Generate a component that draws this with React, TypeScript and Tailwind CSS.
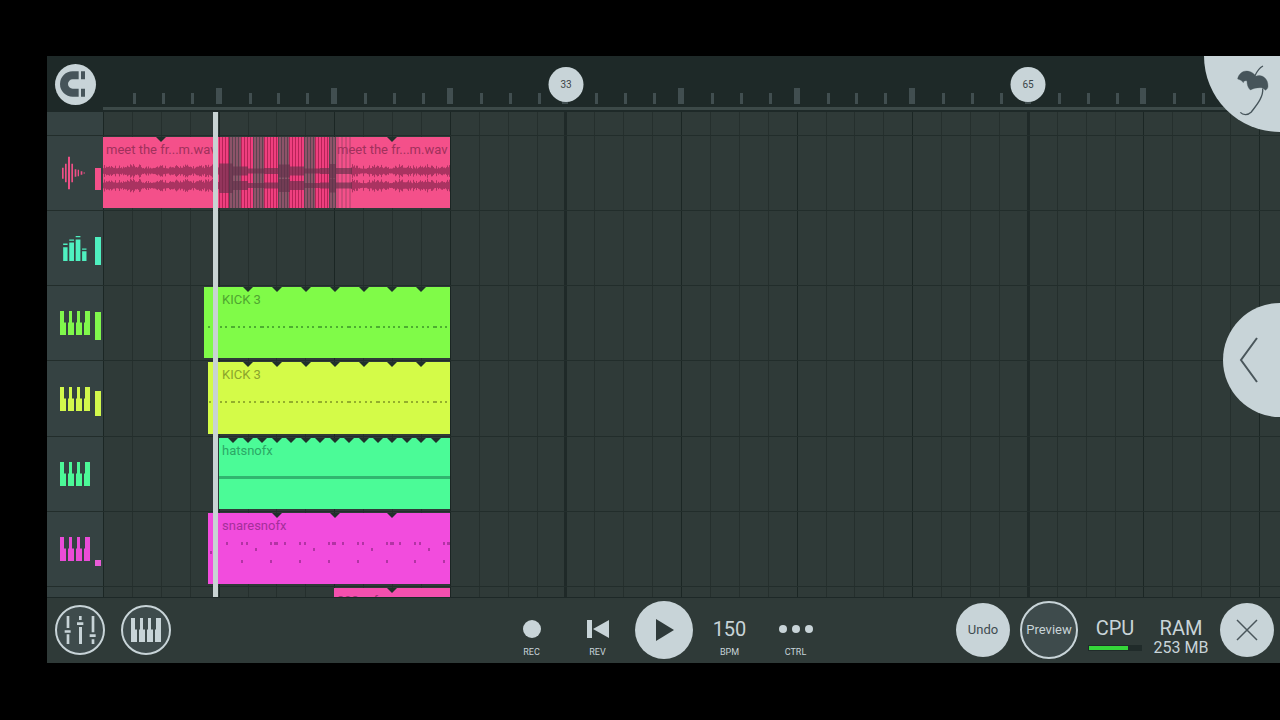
import type { ReactNode } from "react"

// Width of one bar on the timeline
const BAR = 14.45
const GRID_STEPS = Array.from({ length: 41 }, (_, i) => i)

type Clip = {
  start: number
  end: number
  label?: string
  color: string
  ink: string
  notchEvery?: number
  content?: ReactNode
}

type Track = {
  name: string
  icon: "wave" | "mixer" | "piano"
  tint: string
  meter: string
  clips: Clip[]
}

function PianoIcon({ className = "" }: { className?: string }) {
  return (
    <svg className={className} width="30" height="24" viewBox="0 0 30 24" fill="currentColor">
      <path d="M0 0h4v11.500h2V24H0z" />
      <path d="M9 0h3v11.500h2V24H8V11.500h1z" />
      <path d="M17 0h3v11.500h2V24h-6V11.500h1z" />
      <path d="M25 0h5v24h-6V11.500h1z" />
    </svg>
  )
}

function MixerTrackIcon() {
  return (
    <svg width="24" height="25" viewBox="0 0 70 74" fill="currentColor">
      <path d="M0 33h13v41H0zM18 19h14v55H18zM37 10h14v64H37zM56 45h13v29H56z" />
      <path d="M0 22h13v5H0zM18 10h14v4H18zM37 0h14v4H37zM56 37h13v4H56z" />
    </svg>
  )
}

function WaveIcon() {
  return (
    <svg className="-ml-0.5" width="24" height="34" viewBox="0 0 72 102" fill="currentColor">
      <path d="M0 35h5v33H0zM9 23h5v56H9zM18 2h6v98h-6zM28 23h5v56h-5zM38 40h5v22h-5zM47 41h4v20h-4zM56 46h5v10h-5zM65 49h3v4h-3z" />
    </svg>
  )
}

// Stereo waveform, two mirrored bands
function Waveform({ width, from = 0 }: { width: number; from?: number }) {
  const columns = []
  for (let x = from; x < width; x += 1) {
    const noise = Math.abs(Math.sin(x * 12.9898) * 43758.5453) % 1
    const swell = 2.8 + 0.6 * Math.sin(x / 4) + noise * noise * 3.6
    columns.push(
      <rect key={x} x={x} y={34 - swell} width="1" height={swell * 2} />,
      <rect key={`r${x}`} x={x} y={48.5 - swell} width="1" height={swell * 2} />,
    )
  }
  return (
    <svg className="absolute inset-0 h-full w-full" fill="#aa3361">
      {columns}
    </svg>
  )
}

const SLICE_GROUPS = [
  { x: 0, w: 10, dark: false },
  { x: 10, w: 12, dark: true },
  { x: 22, w: 12, dark: false },
  { x: 34, w: 11, dark: true },
  { x: 45, w: 14, dark: false },
  { x: 59, w: 11, dark: true },
  { x: 70, w: 15, dark: false },
  { x: 85, w: 11, dark: true },
  { x: 96, w: 14, dark: false },
  { x: 110, w: 7, dark: true },
]

const SLICE_BLOCKS = [
  [0, 14, 15],
  [14, 15, 9],
  [29, 16, 5],
  [45, 14, 6],
  [59, 12, 13],
  [71, 14, 9],
  [85, 16, 5],
  [101, 9, 6],
  [110, 7, 14],
  [117, 16, 6],
]

function Slices() {
  return (
    <svg className="absolute inset-0 h-full w-full">
      {SLICE_GROUPS.map((g) => (
        <g key={g.x}>
          <rect x={g.x} y="0" width={g.w} height="100%" fill={g.dark ? "#8d5369" : "#ef3f7f"} />
          {Array.from({ length: Math.ceil(g.w / 3) }, (_, i) => (
            <rect
              key={i}
              x={g.x + i * 3}
              y="0"
              width="1"
              height="100%"
              fill={g.dark ? "#5c4450" : "#b82358"}
            />
          ))}
        </g>
      ))}
      <path d="M117 0h3v72h-3zM122 0h2v72h-2zM126 0h2v72h-2zM130 0h2v72h-2z" fill="#cf4a7a" />
      {SLICE_BLOCKS.map(([x, w, h]) => (
        <g key={x} fill="#64304a" opacity="0.65">
          <rect x={x} y={34 - h / 2} width={w} height={h} />
          <rect x={x} y={48.5 - h / 2} width={w} height={h} />
        </g>
      ))}
    </svg>
  )
}

function KickNotes({ color, beats, offset = 0 }: { color: string; beats: number; offset?: number }) {
  return (
    <svg className="absolute inset-0 h-full w-full" fill={color}>
      {Array.from({ length: beats }, (_, i) => {
        const x = Math.round(i * BAR * 2) + offset
        return (
          <path
            key={i}
            d={`M${x + 1} 39h2v2h-2zM${x + 6} 39h2v2h-2zM${x + 12} 39h4v2h-4zM${x + 19} 39h2v2h-2zM${x + 24} 39h2v2h-2z`}
          />
        )
      })}
    </svg>
  )
}

function SnareNotes() {
  return (
    <svg className="absolute inset-0 h-full w-full" fill="#b234a4">
      {[0, 1, 2, 3].map((i) => (
        <g key={i} transform={`translate(${Math.round(i * BAR * 4)} 0)`}>
          {[7, 22, 27, 51, 55, 57].map((x) => (
            <rect key={x} x={x} y="29" width="2" height="3" />
          ))}
          <rect x="36" y="35" width="2" height="3" />
          <rect x="22" y="47" width="2" height="3" />
          <rect x="51" y="47" width="2" height="3" />
        </g>
      ))}
    </svg>
  )
}

const TRACKS: Track[] = [
  {
    name: "Audio",
    icon: "wave",
    tint: "text-[#ee4f86]",
    meter: "h-[22px] bg-[#f4508a]",
    clips: [
      {
        start: 0,
        end: 8,
        label: "meet the fr...m.wav",
        color: "bg-[#f4508a]",
        ink: "text-[#a0315c]",
        notchEvery: 4,
        content: <Waveform width={116} />,
      },
      {
        start: 8,
        end: 24,
        color: "bg-[#f4508a]",
        ink: "text-[#a0315c]",
        content: (
          <>
            <Waveform width={232} from={132} />
            <Slices />
          </>
        ),
      },
      {
        start: 16,
        end: 24,
        label: "meet the fr...m.wav",
        color: "bg-transparent",
        ink: "text-[#a0315c]",
        notchEvery: 4,
      },
    ],
  },
  {
    name: "Effects",
    icon: "mixer",
    tint: "text-[#4ff0c0]",
    meter: "h-[28px] bg-[#4ff0c0]",
    clips: [],
  },
  {
    name: "Kick 1",
    icon: "piano",
    tint: "text-[#80f84c]",
    meter: "h-[28px] bg-[#80f84c]",
    clips: [
      {
        start: 7,
        end: 8,
        color: "bg-[#80fb48]",
        ink: "text-[#45a32a]",
        content: <KickNotes color="#4cae30" beats={1} offset={3} />,
      },
      {
        start: 8,
        end: 24,
        label: "KICK 3",
        color: "bg-[#80fb48]",
        ink: "text-[#4fa530]",
        notchEvery: 2,
        content: <KickNotes color="#4cae30" beats={8} />,
      },
    ],
  },
  {
    name: "Kick 2",
    icon: "piano",
    tint: "text-[#d2f84c]",
    meter: "h-[25px] bg-[#d2f84c]",
    clips: [
      {
        start: 7.25,
        end: 8,
        color: "bg-[#d4fb48]",
        ink: "text-[#8ba52c]",
        content: <KickNotes color="#93ae2c" beats={1} />,
      },
      {
        start: 8,
        end: 24,
        label: "KICK 3",
        color: "bg-[#d4fb48]",
        ink: "text-[#8ba52c]",
        notchEvery: 2,
        content: <KickNotes color="#93ae2c" beats={8} />,
      },
    ],
  },
  {
    name: "Hats",
    icon: "piano",
    tint: "text-[#4cf897]",
    meter: "h-0",
    clips: [
      {
        start: 8,
        end: 24,
        label: "hatsnofx",
        color: "bg-[#4bfb97]",
        ink: "text-[#2ca866]",
        notchEvery: 1,
        content: (
          <svg className="absolute inset-0 h-full w-full">
            <rect x="0" y="38" width="100%" height="3" fill="#31b56f" />
          </svg>
        ),
      },
    ],
  },
  {
    name: "Snares",
    icon: "piano",
    tint: "text-[#ea4cd8]",
    meter: "h-[6px] bg-[#ea5cd8]",
    clips: [
      {
        start: 7.25,
        end: 8,
        color: "bg-[#f24cdd]",
        ink: "text-[#a4309a]",
        content: (
          <svg className="absolute inset-0 h-full w-full">
            <rect x="2" y="38" width="2" height="3" fill="#b234a4" />
          </svg>
        ),
      },
      {
        start: 8,
        end: 24,
        label: "snaresnofx",
        color: "bg-[#f24cdd]",
        ink: "text-[#a4309a]",
        notchEvery: 4,
        content: <SnareNotes />,
      },
    ],
  },
]

const LAST_CLIP: Clip = {
  start: 16,
  end: 24,
  label: "808nofx",
  color: "bg-[#f44fae]",
  ink: "text-[#a03074]",
  notchEvery: 4,
}

function ClipBlock({ clip, tall = true }: { clip: Clip; tall?: boolean }) {
  const left = Math.round(clip.start * BAR)
  const width = Math.round(clip.end * BAR) - left
  const notches = []
  if (clip.notchEvery) {
    for (let b = clip.notchEvery; b < clip.end - clip.start; b += clip.notchEvery) notches.push(b)
  }
  return (
    <div
      className={`absolute top-px overflow-hidden ${tall ? "bottom-[2px]" : "h-[71px]"} ${clip.color}`}
      style={{ left, width }}
    >
      {clip.content}
      {notches.map((b) => (
        <svg
          key={b}
          className="absolute top-0 -translate-x-1/2"
          style={{ left: Math.round(b * BAR) }}
          width="10"
          height="5"
          viewBox="0 0 10 5"
          fill="#20302b"
        >
          <path d="M0 0h10L5 5z" />
        </svg>
      ))}
      {clip.label && (
        <span
          className={`relative block pl-[3px] pt-[5px] text-[13px] leading-4 whitespace-nowrap ${clip.ink}`}
        >
          {clip.label}
        </span>
      )}
    </div>
  )
}

function TrackRow({ track }: { track: Track }) {
  return (
    <div className="flex min-h-0 border-b border-[#222d2b]">
      <button
        aria-label={track.name}
        className="grid w-14 shrink-0 grid-cols-[1fr_30px_1fr] items-center bg-[#354242]"
      >
        <span className={`col-start-2 flex justify-center ${track.tint}`}>
          {track.icon === "wave" && <WaveIcon />}
          {track.icon === "mixer" && <MixerTrackIcon />}
          {track.icon === "piano" && <PianoIcon />}
        </span>
        <span className={`mr-0.5 mb-5 w-[6px] self-end justify-self-end ${track.meter}`} />
      </button>
      <div className="relative flex-1">
        {track.clips.map((clip) => (
          <ClipBlock key={`${clip.start}-${clip.color}`} clip={clip} />
        ))}
      </div>
    </div>
  )
}

function Ruler() {
  return (
    <div className="flex h-14 shrink-0 bg-[#1e2928]">
      <div className="flex w-14 items-center justify-center">
        <button aria-label="Snap" className="size-[41px] rounded-full bg-[#c8d4d8]">
          <svg width="41" height="41" viewBox="44 41 123 123" fill="#46545a">
            <path d="M115 63H97a38 38 0 0 0 0 76h18v-24H97a14 14 0 0 1 0-28h18z" />
            <path d="M122 63h12v24h-12zM122 115h12v24h-12z" />
          </svg>
        </button>
      </div>
      <div className="relative flex-1 overflow-hidden">
        <div className="absolute inset-x-0 bottom-[2px] h-[3px] bg-[#3c4948]" />
        {GRID_STEPS.slice(1).map((i) => (
          <div
            key={i}
            className={`absolute bottom-2 bg-[#414e50] ${i % 4 === 0 ? "h-4 w-[6px] -translate-x-1/2" : "h-[11px] w-[3px]"}`}
            style={{ left: Math.round(i * BAR * 2) + (i % 4 === 0 ? 0 : 1) }}
          />
        ))}
        {[33, 65].map((bar) => (
          <div
            key={bar}
            className="absolute top-[11px] flex size-[35px] -translate-x-1/2 items-center justify-center rounded-full bg-[#c8d4d8] text-[10px] text-[#3b4648]"
            style={{ left: Math.ceil((bar - 1) * BAR) }}
          >
            {bar}
          </div>
        ))}
      </div>
    </div>
  )
}

function Playlist() {
  return (
    <div className="relative grid min-h-0 flex-1 grid-rows-[24px_repeat(6,minmax(0,1fr))_10px] overflow-hidden bg-[#2f3a38]">
      {/* Bar lines */}
      <div className="absolute inset-y-0 right-0 left-14 overflow-hidden">
        {GRID_STEPS.map((i) => (
          <div
            key={i}
            className={`absolute inset-y-0 ${
              i % 16 === 0 && i > 0
                ? "w-[3px] -translate-x-px bg-[#1f2928]"
                : i % 4 === 0
                  ? "w-px bg-[#1b2624]"
                  : "w-px bg-[#252f2d]"
            }`}
            style={{ left: Math.round(i * BAR * 2) }}
          />
        ))}
      </div>
      <div className="relative flex border-b border-[#222d2b]">
        <div className="w-14 bg-[#354242]" />
      </div>
      {TRACKS.map((track) => (
        <div key={track.name} className="relative grid min-h-0">
          <TrackRow track={track} />
        </div>
      ))}
      <div className="relative flex overflow-hidden">
        <div className="w-14 bg-[#354242]" />
        <div className="relative flex-1">
          <ClipBlock clip={LAST_CLIP} tall={false} />
        </div>
      </div>
      {/* Playhead */}
      <div className="absolute inset-y-0 left-[166px] w-[5px] bg-[#c8d3d3]" />
    </div>
  )
}

function Transport({ label, children }: { label: string; children: ReactNode }) {
  return (
    <button className="mt-3 flex w-[66px] flex-col items-center">
      <span className="flex h-8 items-center">{children}</span>
      <span className="mt-px text-[9px] leading-3">{label}</span>
    </button>
  )
}

function Toolbar() {
  return (
    <footer className="grid h-[66px] shrink-0 grid-cols-[1fr_auto_1fr] items-center border-t border-[#1d2827] bg-[#2f3a38] pb-0.5 text-[#c8d4d8]">
      <div className="flex">
        <div className="flex w-[66px] justify-center">
          <button
            aria-label="Mixer"
            className="flex size-[50px] items-center justify-center rounded-full border-2 border-[#c8d4d8] bg-[#3e4b4c]"
          >
            <svg width="32" height="28" viewBox="0 0 96 84" fill="currentColor">
              <path d="M8 0h8v36H8zM2 43h18v7H2zM8 55h8v29H8z" />
              <path d="M45 0h8v12h-8zM39 19h19v8H39zM45 33h9v51h-9z" />
              <path d="M83 0h8v49h-8zM77 55h18v8H77zM83 70h8v14h-8z" />
            </svg>
          </button>
        </div>
        <div className="flex w-[66px] justify-center">
          <button
            aria-label="Keyboard"
            className="flex size-[50px] items-center justify-center rounded-full border-2 border-[#c8d4d8] bg-[#3e4b4c]"
          >
            <PianoIcon />
          </button>
        </div>
      </div>

      <div className="flex items-center">
        <Transport label="REC">
          <span className="size-[18px] rounded-full bg-current" />
        </Transport>
        <Transport label="REV">
          <svg width="22" height="18" viewBox="0 0 22 18" fill="currentColor">
            <path d="M0 0h5v18H0zM22 0v18L6 9z" />
          </svg>
        </Transport>
        <div className="flex w-[66px] justify-center">
          <button
            aria-label="Play"
            className="flex size-[58px] items-center justify-center rounded-full bg-[#c8d4d8]"
          >
            <svg className="ml-0.5" width="18" height="22" viewBox="0 0 18 22" fill="#2f3a3a">
              <path d="M0 0l18 11L0 22z" />
            </svg>
          </button>
        </div>
        <Transport label="BPM">
          <span className="text-[20px] leading-6">150</span>
        </Transport>
        <Transport label="CTRL">
          <span className="flex gap-[5px]">
            <span className="size-2 rounded-full bg-current" />
            <span className="size-2 rounded-full bg-current" />
            <span className="size-2 rounded-full bg-current" />
          </span>
        </Transport>
      </div>

      <div className="flex items-center justify-end">
        <div className="flex w-[66px] justify-center">
          <button className="size-[54px] rounded-full bg-[#c8d4d8] text-[13px] text-[#3f4b50]">
            Undo
          </button>
        </div>
        <div className="flex w-[66px] justify-center">
          <button className="flex size-[58px] items-center justify-center rounded-full border-2 border-[#c8d4d8] bg-[#3e4b4c] text-[13px]">
            Preview
          </button>
        </div>
        <div className="flex w-[66px] flex-col items-center pt-3">
          <span className="mt-1 text-[20px] leading-6">CPU</span>
          <div className="mt-[5px] mb-2 h-[6px] w-[54px] bg-[#202b2a] p-px">
            <div className="h-full w-[39px] bg-[#35d63a]" />
          </div>
        </div>
        <div className="flex w-[66px] flex-col items-center pt-2 whitespace-nowrap">
          <span className="mt-1 text-[20px] leading-6">RAM</span>
          <span className="text-base leading-4">253 MB</span>
        </div>
        <div className="flex w-[66px] justify-center">
          <button
            aria-label="Close"
            className="flex size-[54px] items-center justify-center rounded-full bg-[#c8d4d8]"
          >
            <svg width="22" height="22" viewBox="0 0 22 22" stroke="#4a565b" strokeWidth="1.500">
              <path d="M1 1l20 20M21 1L1 21" />
            </svg>
          </button>
        </div>
      </div>
    </footer>
  )
}

export default function App() {
  return (
    <div className="flex h-screen flex-col bg-black pt-14 pb-[57px] pl-[47px] font-['Roboto',sans-serif]">
      <main className="relative flex min-h-0 flex-1 flex-col overflow-hidden">
        <Ruler />
        <Playlist />
        <Toolbar />

        {/* Menu corner */}
        <button
          aria-label="Main menu"
          className="absolute top-0 right-0 size-[76px] rounded-bl-full bg-[#c8d4d8]"
        >
          <svg
            className="absolute top-[9px] right-[11px]"
            width="32"
            height="51"
            viewBox="292 44 96 153"
            fill="none"
            stroke="#46545a"
          >
            <path
              d="M294 86C296 72 308 62 320 62C334 62 344 70 348 78C366 70 386 84 385 108C385 114 381 118 377 120C372 112 366 112 360 112C350 112 342 114 332 119C324 112 322 102 322 92C316 90 312 92 311 97C307 92 304 89 294 86Z"
              fill="#46545a"
            />
            <path d="M345 78C352 62 360 52 370 47" strokeWidth="4" />
            <path d="M369 114C372 140 350 165 335 185C325 195 310 195 302 186" strokeWidth="4" />
          </svg>
        </button>

        {/* Side drawer handle */}
        <button
          aria-label="Open panel"
          className="absolute top-1/2 right-0 flex h-[114px] w-[57px] -translate-y-1/2 items-center rounded-l-full bg-[#c8d4d8] pl-4"
        >
          <svg width="20" height="46" viewBox="0 0 20 46" fill="none" stroke="#4a565b" strokeWidth="2">
            <path d="M18 1L2 23l16 22" />
          </svg>
        </button>
      </main>
    </div>
  )
}
